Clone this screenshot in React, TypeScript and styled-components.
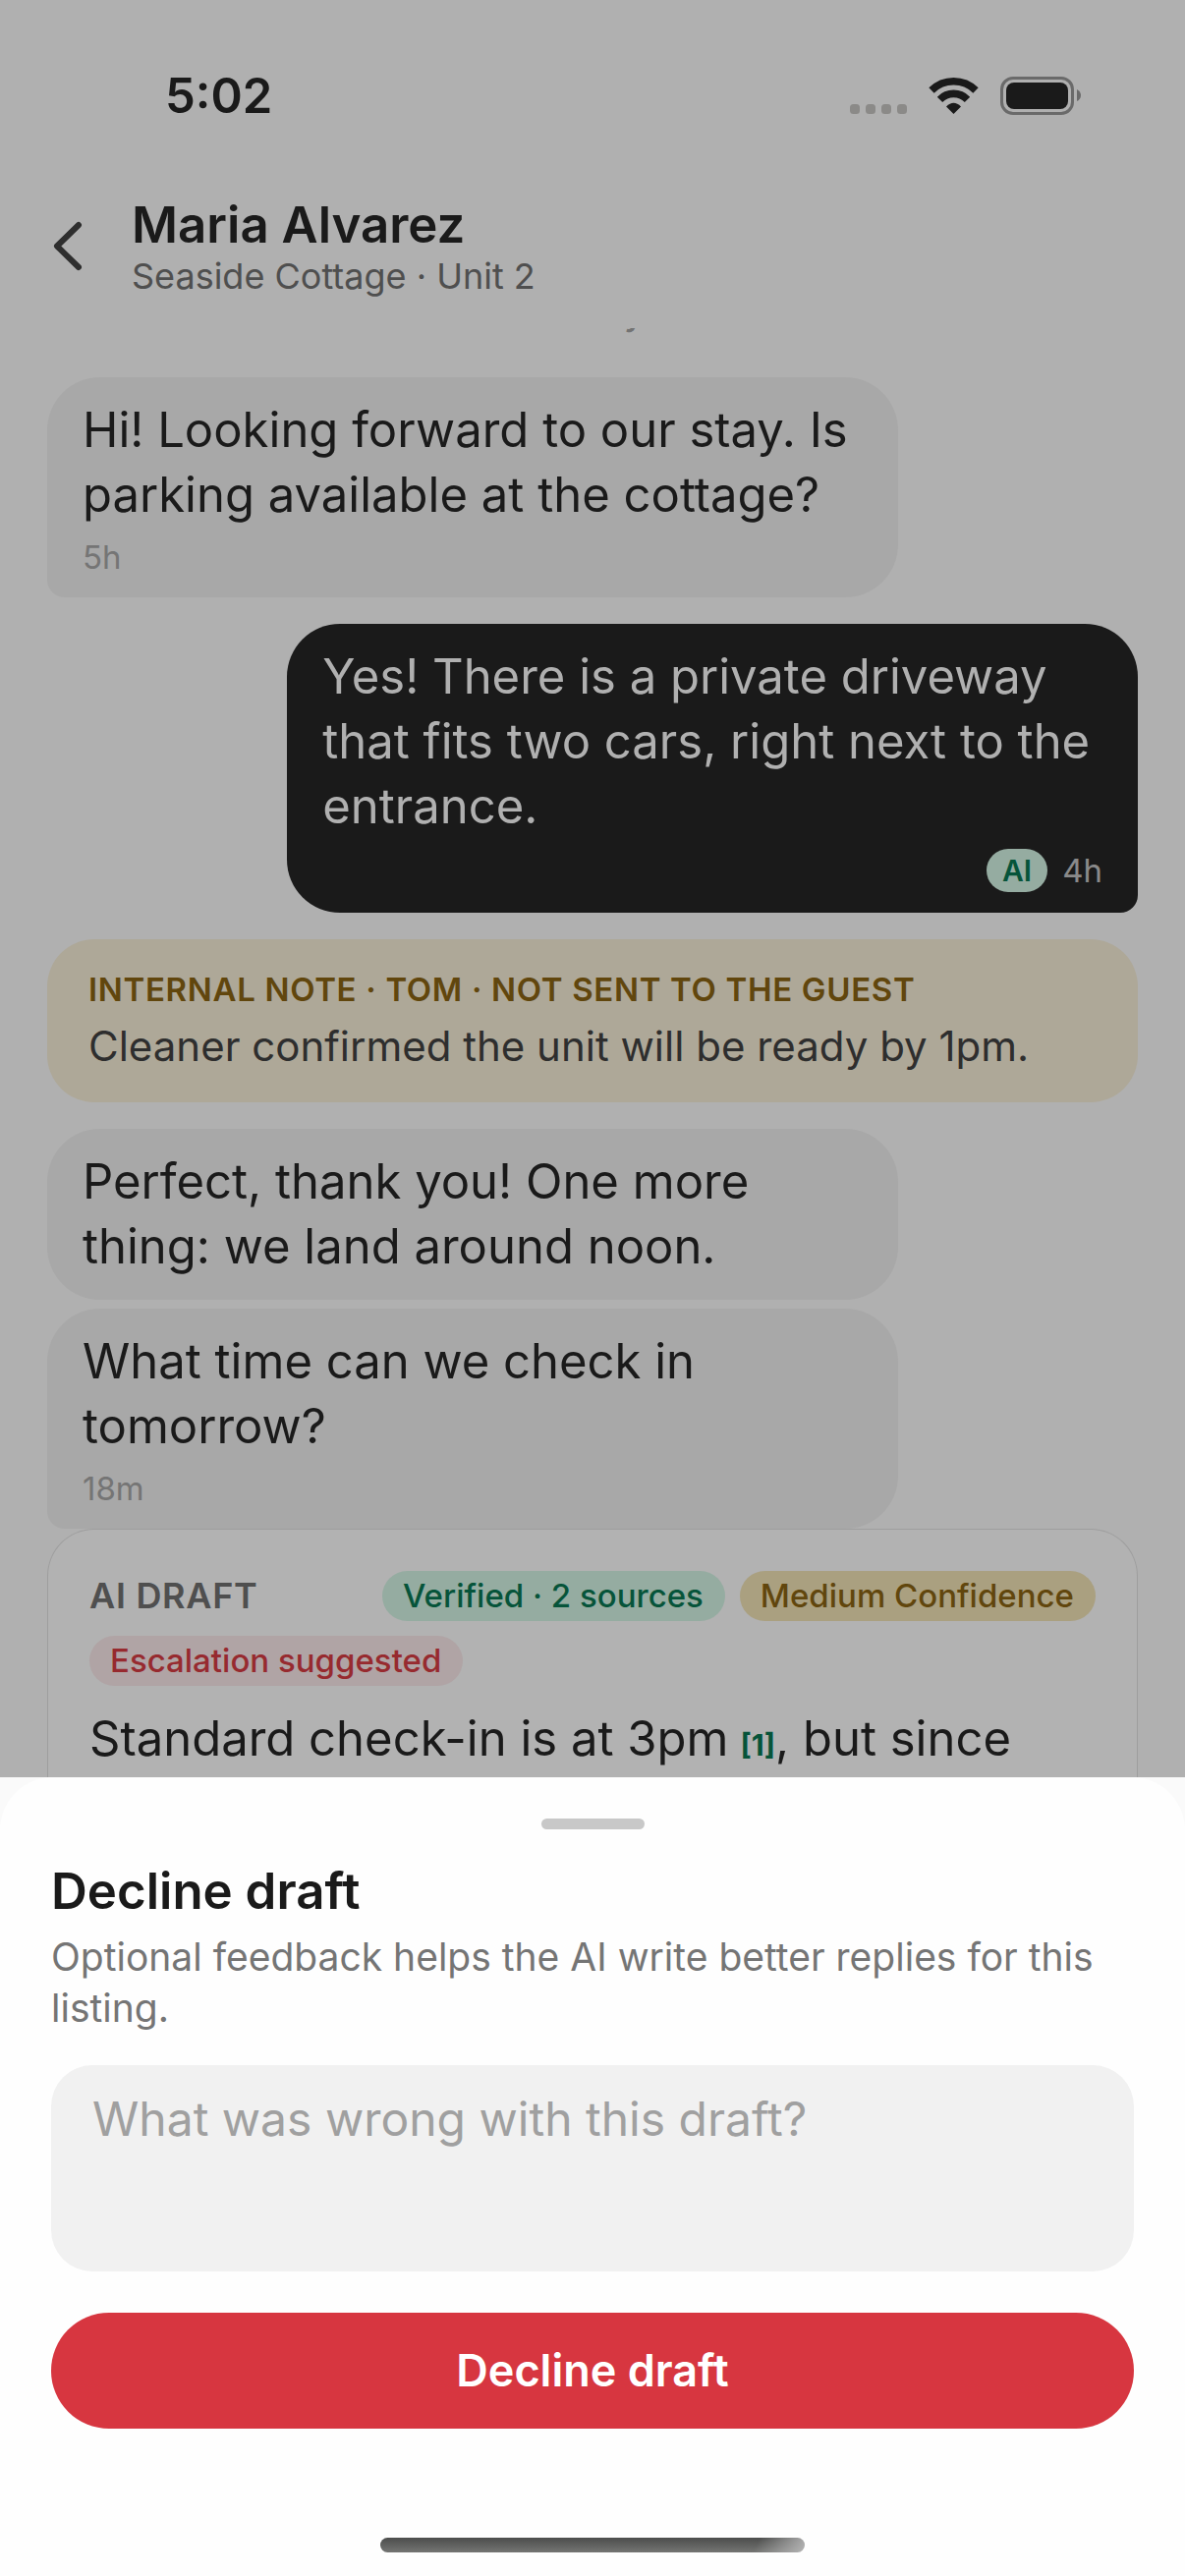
import React from "react";
import styled, { createGlobalStyle } from "styled-components";

const Global = createGlobalStyle`
  *, *::before, *::after { box-sizing: border-box; }
  html, body, #root { height: 100%; }
  body {
    margin: 0;
    background: #b0b0b0;
    color: #1a1a1a;
    font-family: Inter, "Liberation Sans", sans-serif;
  }
  h1, h2, p { margin: 0; }
`;

const Screen = styled.div`
  height: 100%;
  display: flex;
  flex-direction: column;
  overflow: hidden;
`;

const StatusBar = styled.div`
  flex: none;
  height: 186px;
  padding: 66px 106px 0 168px;
  display: flex;
  justify-content: space-between;
  align-items: flex-start;
`;

const Clock = styled.span`
  font-size: 49px;
  line-height: 64px;
  font-weight: 600;
`;

const Header = styled.header`
  flex: none;
  height: 148px;
  padding: 10px 48px 0 51px;
  display: flex;
  align-items: flex-start;
  gap: 41px;
`;

const BackButton = styled.button`
  width: 42px;
  padding: 27px 0 0;
  border: 0;
  background: none;
  display: flex;
`;

const Guest = styled.h1`
  font-size: 51px;
  line-height: 66px;
  font-weight: 600;
`;

const Listing = styled.p`
  font-size: 36px;
  line-height: 39px;
  color: #4f4f4f;
`;

const Thread = styled.main`
  flex: 1;
  min-height: 0;
  overflow: hidden;
  display: flex;
  flex-direction: column;
  justify-content: flex-end;
  padding: 0 48px;
`;

const DayLabel = styled.p`
  flex: none;
  align-self: center;
  margin-bottom: 42px;
  font-size: 36px;
  line-height: 48px;
  font-weight: 500;
  color: #737373;
`;

const Group = styled.div`
  flex: none;
  display: flex;
  flex-direction: column;
  gap: 9px;
  margin-bottom: 27px;
`;

const LastGroup = styled(Group)`
  margin-bottom: 0;
`;

const Bubble = styled.div<{ $out?: boolean; $tail?: boolean }>`
  width: 78%;
  padding: 21px 36px;
  align-self: ${(p) => (p.$out ? "flex-end" : "flex-start")};
  background: ${(p) => (p.$out ? "#1a1a1a" : "#a8a8a8")};
  color: ${(p) => (p.$out ? "#b0b0b0" : "#1a1a1a")};
  border-radius: ${(p) =>
    !p.$tail ? "54px" : p.$out ? "54px 54px 18px 54px" : "54px 54px 54px 18px"};
`;

const BodyText = styled.p`
  font-size: 49px;
  line-height: 66px;
`;

const Meta = styled.div<{ $out?: boolean }>`
  margin-top: 10px;
  display: flex;
  align-items: center;
  justify-content: ${(p) => (p.$out ? "flex-end" : "flex-start")};
  gap: 15px;
  font-size: 33px;
  line-height: 40px;
  color: ${(p) => (p.$out ? "#8a8a8a" : "#757575")};
`;

const AiTag = styled.span`
  padding: 0 16px;
  border-radius: 22px;
  background: #95aca1;
  color: #06543a;
  font-size: 30px;
  line-height: 44px;
  font-weight: 600;
`;

const Note = styled.aside`
  flex: none;
  margin-bottom: 27px;
  padding: 27px 42px;
  border-radius: 48px;
  background: #aea898;
`;

const NoteTitle = styled.p`
  font-size: 33px;
  line-height: 48px;
  font-weight: 600;
  letter-spacing: 0.02em;
  text-transform: uppercase;
  color: #61460d;
`;

const NoteText = styled.p`
  margin-top: 4px;
  font-size: 42px;
  line-height: 60px;
  color: #2e2e2e;
`;

const DraftCard = styled.section`
  flex: none;
  height: 253px;
  padding: 42px 42px 0;
  border: 1px solid #9e9e9e;
  border-bottom: 0;
  border-radius: 48px 48px 0 0;
  background: #b2b2b2;
`;

const Badges = styled.div`
  display: flex;
  flex-wrap: wrap;
  align-items: center;
  gap: 15px;
  margin-bottom: 21px;
`;

const DraftLabel = styled.span`
  margin-right: auto;
  font-size: 36px;
  line-height: 51px;
  font-weight: 600;
  letter-spacing: 0.02em;
  color: #4f4f4f;
`;

const tones = {
  green: { bg: "#95aca1", fg: "#06543a" },
  amber: { bg: "#aaa080", fg: "#61460d" },
  red: { bg: "#b0a4a5", fg: "#972a2f" },
};

const Badge = styled.span<{ $tone: keyof typeof tones }>`
  padding: 0 22px 0 21px;
  border-radius: 26px;
  background: ${(p) => tones[p.$tone].bg};
  color: ${(p) => tones[p.$tone].fg};
  font-size: 33px;
  line-height: 51px;
  font-weight: 500;
  white-space: nowrap;
`;

const Cite = styled.a`
  margin-left: 12px;
  font-size: 30px;
  font-weight: 700;
  color: #06543a;
  text-decoration: none;
`;

const SheetBackdrop = styled.div`
  flex: none;
  background: #fafafa;
`;

const Sheet = styled.form`
  padding: 42px 52px 24px;
  border-radius: 54px 54px 0 0;
  background: #fefefe;
  display: flex;
  flex-direction: column;
`;

const Grabber = styled.div`
  align-self: center;
  width: 105px;
  height: 11px;
  border-radius: 6px;
  background: #c8c8c8;
`;

const SheetTitle = styled.h2`
  margin-top: 30px;
  font-size: 51px;
  line-height: 66px;
  font-weight: 600;
`;

const SheetText = styled.label`
  margin-top: 8px;
  font-size: 39px;
  line-height: 52px;
  color: #757575;
`;

const Feedback = styled.textarea`
  margin-top: 32px;
  height: 210px;
  padding: 26px 42px;
  border: 0;
  border-radius: 42px;
  outline: 0;
  resize: none;
  background: #f1f1f1;
  color: #1a1a1a;
  font: 400 48px/58px Inter, "Liberation Sans", sans-serif;
  &::placeholder { color: #a0a0a0; opacity: 1; }
`;

const DeclineButton = styled.button`
  margin-top: 42px;
  height: 118px;
  padding: 0;
  border: 0;
  border-radius: 59px;
  background: #d73640;
  color: #ffffff;
  font: 600 45px/60px Inter, "Liberation Sans", sans-serif;
`;

const HomeIndicator = styled.div`
  align-self: center;
  width: 432px;
  height: 15px;
  margin-top: 111px;
  border-radius: 8px;
  background:
    linear-gradient(115deg, transparent 88%, #b4b4b4 100%),
    linear-gradient(#4c4d4c, #747573);
`;

function StatusIcons() {
  return (
    <svg width="236" height="64" viewBox="864 66 236 64" aria-hidden="true">
      <g fill="#8b8a88">
        <rect x="865" y="106" width="10" height="10" rx="3.5" />
        <rect x="881" y="106" width="10" height="10" rx="3.5" />
        <rect x="897" y="106" width="10" height="10" rx="3.5" />
        <rect x="913" y="106" width="10" height="10" rx="3.5" />
      </g>
      <g fill="none" stroke="#1a1a1a" strokeWidth="7.6">
        <path d="M948 92 A32 32 0 0 1 993 92" />
        <path d="M956.5 101.300 A19.600 19.600 0 0 1 984.500 101.300" />
      </g>
      <path d="M970.500 116 L963 108.500 Q970.500 101 978 108.500 Z" fill="#1a1a1a" />
      <rect x="1019.500" y="79.500" width="72" height="36" rx="11.500" fill="none" stroke="#6a6a6a" strokeWidth="3" />
      <rect x="1024" y="84" width="63" height="27" rx="8" fill="#1a1a1a" />
      <path d="M1096 91 Q1100 93 1100 97 T1096 103 Z" fill="#6a6a6a" />
    </svg>
  );
}

export default function App() {
  return (
    <Screen>
      <Global />
      <StatusBar>
        <Clock>5:02</Clock>
        <StatusIcons />
      </StatusBar>
      <Header>
        <BackButton type="button" aria-label="Back">
          <svg width="42" height="54" viewBox="0 0 42 54" aria-hidden="true">
            <path d="M29 6 L7 27.500 L29 49" fill="none" stroke="#2e2e2e" strokeWidth="6" strokeLinecap="round" strokeLinejoin="round" />
          </svg>
        </BackButton>
        <div>
          <Guest>Maria Alvarez</Guest>
          <Listing>Seaside Cottage · Unit 2</Listing>
        </div>
      </Header>
      <Thread>
        <DayLabel>Today</DayLabel>
        <Group>
          <Bubble $tail>
            <BodyText>Hi! Looking forward to our stay. Is parking available at the cottage?</BodyText>
            <Meta>5h</Meta>
          </Bubble>
        </Group>
        <Group>
          <Bubble $out $tail>
            <BodyText>Yes! There is a private driveway that fits two cars, right next to the entrance.</BodyText>
            <Meta $out>
              <AiTag>AI</AiTag>4h
            </Meta>
          </Bubble>
        </Group>
        <Note>
          <NoteTitle>Internal note · Tom · Not sent to the guest</NoteTitle>
          <NoteText>Cleaner confirmed the unit will be ready by 1pm.</NoteText>
        </Note>
        <LastGroup>
          <Bubble>
            <BodyText>Perfect, thank you! One more thing: we land around noon.</BodyText>
          </Bubble>
          <Bubble $tail>
            <BodyText>What time can we check in tomorrow?</BodyText>
            <Meta>18m</Meta>
          </Bubble>
        </LastGroup>
        <DraftCard>
          <Badges>
            <DraftLabel>AI DRAFT</DraftLabel>
            <Badge $tone="green">Verified · 2 sources</Badge>
            <Badge $tone="amber">Medium Confidence</Badge>
            <Badge $tone="red">Escalation suggested</Badge>
          </Badges>
          <BodyText>
            Standard check-in is at 3pm<Cite href="#source-1">[1]</Cite>, but since
          </BodyText>
        </DraftCard>
      </Thread>
      <SheetBackdrop>
        <Sheet>
          <Grabber />
          <SheetTitle>Decline draft</SheetTitle>
          <SheetText htmlFor="feedback">
            Optional feedback helps the AI write better replies for this listing.
          </SheetText>
          <Feedback id="feedback" placeholder="What was wrong with this draft?" />
          <DeclineButton type="button">Decline draft</DeclineButton>
          <HomeIndicator />
        </Sheet>
      </SheetBackdrop>
    </Screen>
  );
}
